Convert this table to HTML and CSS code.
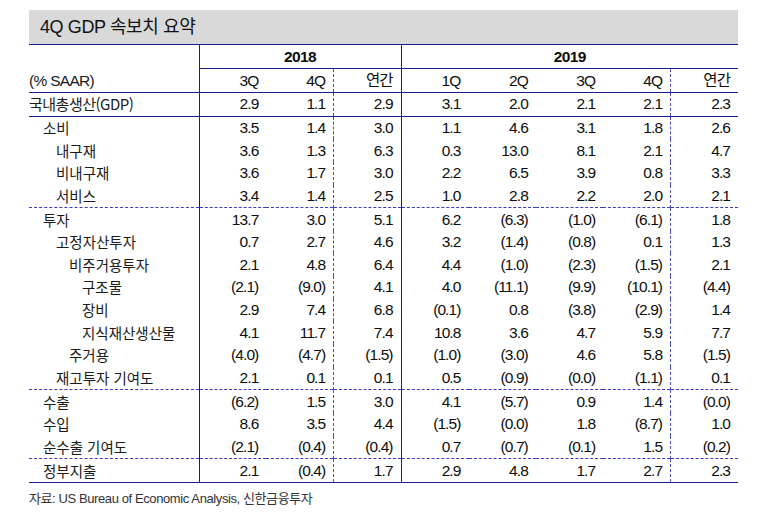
FILE: index.html
```html
<!DOCTYPE html>
<html lang="ko">
<head>
<meta charset="utf-8">
<link rel="stylesheet" href="styles.css">
</head>
<body>
<div class="page">
  <div class="title">4Q GDP 속보치 요약</div>
  <table class="gdp">
    <colgroup>
      <col class="c-label">
      <col class="c-num"><col class="c-num"><col class="c-num">
      <col class="c-num"><col class="c-num"><col class="c-num"><col class="c-num"><col class="c-num">
    </colgroup>
    <thead>
      <tr class="yr">
        <th class="lab" rowspan="2"><span class="unit">(% SAAR)</span></th>
        <th colspan="3" class="year sep">2018</th>
        <th colspan="5" class="year">2019</th>
      </tr>
      <tr class="hd">
        <th>3Q</th><th class="dash">4Q</th><th class="sep">연간</th>
        <th>1Q</th><th>2Q</th><th>3Q</th><th class="dash">4Q</th><th>연간</th>
      </tr>
    </thead>
    <tbody class="grp">
      <tr><td class="lab l0">국내총생산(GDP)</td><td>2.9</td><td class="dash">1.1</td><td class="sep">2.9</td><td>3.1</td><td>2.0</td><td>2.1</td><td class="dash">2.1</td><td>2.3</td></tr>
    </tbody>
    <tbody class="grp">
      <tr><td class="lab l1">소비</td><td>3.5</td><td class="dash">1.4</td><td class="sep">3.0</td><td>1.1</td><td>4.6</td><td>3.1</td><td class="dash">1.8</td><td>2.6</td></tr>
      <tr><td class="lab l2">내구재</td><td>3.6</td><td class="dash">1.3</td><td class="sep">6.3</td><td>0.3</td><td>13.0</td><td>8.1</td><td class="dash">2.1</td><td>4.7</td></tr>
      <tr><td class="lab l2">비내구재</td><td>3.6</td><td class="dash">1.7</td><td class="sep">3.0</td><td>2.2</td><td>6.5</td><td>3.9</td><td class="dash">0.8</td><td>3.3</td></tr>
      <tr><td class="lab l2">서비스</td><td>3.4</td><td class="dash">1.4</td><td class="sep">2.5</td><td>1.0</td><td>2.8</td><td>2.2</td><td class="dash">2.0</td><td>2.1</td></tr>
    </tbody>
    <tbody class="grp dashed">
      <tr><td class="lab l1">투자</td><td>13.7</td><td class="dash">3.0</td><td class="sep">5.1</td><td>6.2</td><td>(6.3)</td><td>(1.0)</td><td class="dash">(6.1)</td><td>1.8</td></tr>
      <tr><td class="lab l2">고정자산투자</td><td>0.7</td><td class="dash">2.7</td><td class="sep">4.6</td><td>3.2</td><td>(1.4)</td><td>(0.8)</td><td class="dash">0.1</td><td>1.3</td></tr>
      <tr><td class="lab l3">비주거용투자</td><td>2.1</td><td class="dash">4.8</td><td class="sep">6.4</td><td>4.4</td><td>(1.0)</td><td>(2.3)</td><td class="dash">(1.5)</td><td>2.1</td></tr>
      <tr><td class="lab l4">구조물</td><td>(2.1)</td><td class="dash">(9.0)</td><td class="sep">4.1</td><td>4.0</td><td>(11.1)</td><td>(9.9)</td><td class="dash">(10.1)</td><td>(4.4)</td></tr>
      <tr><td class="lab l4">장비</td><td>2.9</td><td class="dash">7.4</td><td class="sep">6.8</td><td>(0.1)</td><td>0.8</td><td>(3.8)</td><td class="dash">(2.9)</td><td>1.4</td></tr>
      <tr><td class="lab l4">지식재산생산물</td><td>4.1</td><td class="dash">11.7</td><td class="sep">7.4</td><td>10.8</td><td>3.6</td><td>4.7</td><td class="dash">5.9</td><td>7.7</td></tr>
      <tr><td class="lab l3">주거용</td><td>(4.0)</td><td class="dash">(4.7)</td><td class="sep">(1.5)</td><td>(1.0)</td><td>(3.0)</td><td>4.6</td><td class="dash">5.8</td><td>(1.5)</td></tr>
      <tr><td class="lab l2">재고투자 기여도</td><td>2.1</td><td class="dash">0.1</td><td class="sep">0.1</td><td>0.5</td><td>(0.9)</td><td>(0.0)</td><td class="dash">(1.1)</td><td>0.1</td></tr>
    </tbody>
    <tbody class="grp dashed">
      <tr><td class="lab l1">수출</td><td>(6.2)</td><td class="dash">1.5</td><td class="sep">3.0</td><td>4.1</td><td>(5.7)</td><td>0.9</td><td class="dash">1.4</td><td>(0.0)</td></tr>
      <tr><td class="lab l1">수입</td><td>8.6</td><td class="dash">3.5</td><td class="sep">4.4</td><td>(1.5)</td><td>(0.0)</td><td>1.8</td><td class="dash">(8.7)</td><td>1.0</td></tr>
      <tr><td class="lab l1">순수출 기여도</td><td>(2.1)</td><td class="dash">(0.4)</td><td class="sep">(0.4)</td><td>0.7</td><td>(0.7)</td><td>(0.1)</td><td class="dash">1.5</td><td>(0.2)</td></tr>
    </tbody>
    <tbody class="grp dashed last">
      <tr><td class="lab l1">정부지출</td><td>2.1</td><td class="dash">(0.4)</td><td class="sep">1.7</td><td>2.9</td><td>4.8</td><td>1.7</td><td class="dash">2.7</td><td>2.3</td></tr>
    </tbody>
  </table>
  <p class="source">자료: US Bureau of Economic Analysis, 신한금융투자</p>
</div>
</body>
</html>
```

FILE: styles.css
```css
html, body {
  margin: 0;
  padding: 0;
  background: #ffffff;
}

.page {
  padding: 10px 0 0 29px;
  font-family: "Liberation Sans", "Noto Sans CJK KR", sans-serif;
  color: #111111;
}

.title {
  width: 698px;
  height: 34px;
  padding-left: 11px;
  background: #d9d9d9;
  font-size: 18px;
  letter-spacing: -0.4px;
  line-height: 34px;
  color: #111111;
}

.gdp {
  width: 709px;
  border-collapse: collapse;
  table-layout: fixed;
  border-top: 1px solid #1a1a8a;
  border-bottom: 1px solid #1a1a8a;
  font-size: 15.5px;
  letter-spacing: -0.9px;
  color: #0d0d0d;
}

.c-label { width: 170px; }
.c-num { width: 67.375px; }

.gdp th,
.gdp td {
  padding: 0 8px 0 0;
  text-align: right;
  font-weight: normal;
  white-space: nowrap;
  vertical-align: middle;
}

.gdp td {
  height: 22.65px;
  line-height: 22px;
}

.yr th {
  height: 23px;
  line-height: 23px;
}

.hd th {
  height: 23px;
  line-height: 23px;
  border-top: 1px solid #1a1a8a;
}

.gdp th.year {
  text-align: center;
  font-weight: bold;
  letter-spacing: -0.6px;
  padding: 0;
}

.gdp .lab {
  text-align: left;
  padding-left: 0;
  border-right: 1px solid #1a1a8a;
  font-family: "Noto Sans CJK KR", "Liberation Sans", sans-serif;
  font-size: 14.5px;
  letter-spacing: 0;
  color: #1a1a1a;
}

.gdp td.l0 {
  font-size: 15px;
  letter-spacing: -0.5px;
}

.gdp th.lab {
  vertical-align: bottom;
}

.unit {
  display: block;
  height: 23px;
  line-height: 23px;
  font-family: "Liberation Sans", sans-serif;
  font-size: 15.5px;
  letter-spacing: -0.7px;
}

.gdp .lab.l0 { padding-left: 0; }
.gdp .lab.l1 { padding-left: 14px; }
.gdp .lab.l2 { padding-left: 27px; }
.gdp .lab.l3 { padding-left: 40px; }
.gdp .lab.l4 { padding-left: 53px; }

.gdp .dash { border-right: 1px dashed #5050c8; }
.gdp .sep { border-right: 1px solid #1a1a8a; }

.grp { border-top: 1px solid #1a1a8a; }
.grp.dashed { border-top: 1px dashed #3c3cc0; }

.source {
  margin: 8px 0 0 0;
  font-size: 13px;
  line-height: 16px;
  letter-spacing: -0.4px;
  color: #333333;
}
```
